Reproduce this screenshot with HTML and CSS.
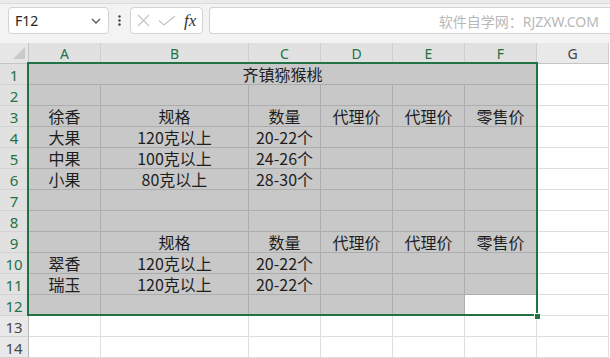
FILE: index.html
```html
<!DOCTYPE html>
<html lang="zh-CN">
<head>
<meta charset="utf-8">
<title>齐镇猕猴桃</title>
<link rel="stylesheet" href="styles.css">
</head>
<body>
<div class="topband"></div>
<div class="toolbar">
  <div class="namebox">
    <span class="ref">F12</span>
    <svg class="chev" width="10" height="6" viewBox="0 0 10 6"><path d="M1 1 L5 5 L9 1" fill="none" stroke="#555" stroke-width="1.3"/></svg>
  </div>
  <div class="dots">
    <svg width="3" height="11" viewBox="0 0 3 11"><circle cx="1.5" cy="1.5" r="1.2" fill="#444"/><circle cx="1.5" cy="5.5" r="1.2" fill="#444"/><circle cx="1.5" cy="9.5" r="1.2" fill="#444"/></svg>
  </div>
  <div class="fxbox">
    <svg class="icon-x" width="13" height="13" viewBox="0 0 13 13"><path d="M1 1 L12 12 M12 1 L1 12" stroke="#c4c4c4" stroke-width="1.2" fill="none"/></svg>
    <svg class="icon-ok" width="18" height="11" viewBox="0 0 18 11"><path d="M1 5.5 L6 10 L17 1" stroke="#c4c4c4" stroke-width="1.2" fill="none"/></svg>
    <span class="fx">fx</span>
  </div>
  <div class="formula"><span class="wm">软件自学网：RJZXW.COM</span></div>
</div>

<div class="sheet">
  <div class="corner"><span class="tri"></span></div>
  <div class="ch on">A</div><div class="ch on">B</div><div class="ch on">C</div><div class="ch on">D</div><div class="ch on">E</div><div class="ch on">F</div><div class="ch">G</div>

  <div class="rh on">1</div>
  <div class="c g title">齐镇猕猴桃</div>
  <div class="c"></div>

  <div class="rh on">2</div>
  <div class="c g"></div><div class="c g"></div><div class="c g"></div><div class="c g"></div><div class="c g"></div><div class="c g"></div><div class="c"></div>

  <div class="rh on">3</div>
  <div class="c g">徐香</div><div class="c g">规格</div><div class="c g">数量</div><div class="c g">代理价</div><div class="c g">代理价</div><div class="c g">零售价</div><div class="c"></div>

  <div class="rh on">4</div>
  <div class="c g">大果</div><div class="c g">120克以上</div><div class="c g">20-22个</div><div class="c g"></div><div class="c g"></div><div class="c g"></div><div class="c"></div>

  <div class="rh on">5</div>
  <div class="c g">中果</div><div class="c g">100克以上</div><div class="c g">24-26个</div><div class="c g"></div><div class="c g"></div><div class="c g"></div><div class="c"></div>

  <div class="rh on">6</div>
  <div class="c g">小果</div><div class="c g">80克以上</div><div class="c g">28-30个</div><div class="c g"></div><div class="c g"></div><div class="c g"></div><div class="c"></div>

  <div class="rh on">7</div>
  <div class="c g"></div><div class="c g"></div><div class="c g"></div><div class="c g"></div><div class="c g"></div><div class="c g"></div><div class="c"></div>

  <div class="rh on">8</div>
  <div class="c g"></div><div class="c g"></div><div class="c g"></div><div class="c g"></div><div class="c g"></div><div class="c g"></div><div class="c"></div>

  <div class="rh on">9</div>
  <div class="c g"></div><div class="c g">规格</div><div class="c g">数量</div><div class="c g">代理价</div><div class="c g">代理价</div><div class="c g">零售价</div><div class="c"></div>

  <div class="rh on">10</div>
  <div class="c g">翠香</div><div class="c g">120克以上</div><div class="c g">20-22个</div><div class="c g"></div><div class="c g"></div><div class="c g"></div><div class="c"></div>

  <div class="rh on">11</div>
  <div class="c g">瑞玉</div><div class="c g">120克以上</div><div class="c g">20-22个</div><div class="c g"></div><div class="c g"></div><div class="c g"></div><div class="c"></div>

  <div class="rh on">12</div>
  <div class="c g"></div><div class="c g"></div><div class="c g"></div><div class="c g"></div><div class="c g"></div><div class="c active"></div><div class="c"></div>

  <div class="rh">13</div>
  <div class="c"></div><div class="c"></div><div class="c"></div><div class="c"></div><div class="c"></div><div class="c"></div><div class="c"></div>

  <div class="rh">14</div>
  <div class="c"></div><div class="c"></div><div class="c"></div><div class="c"></div><div class="c"></div><div class="c"></div><div class="c"></div>

  <div class="selection"><span class="handle"></span></div>
</div>
</body>
</html>
```

FILE: styles.css
```css
* { box-sizing: border-box; }

body {
  margin: 0;
  width: 610px;
  height: 358px;
  overflow: hidden;
  background: #f3f3f3;
  font-family: "Noto Sans", "Noto Sans CJK SC", sans-serif;
}

.topband {
  height: 4px;
  background: #ebebeb;
  border-bottom: 1px solid #dcdcdc;
}

.toolbar {
  height: 39px;
  display: flex;
  align-items: flex-start;
  padding: 3px 0 0 8px;
}

.namebox {
  width: 101px;
  height: 27px;
  background: #fff;
  border: 1px solid #d3d3d3;
  border-radius: 4px;
  display: flex;
  align-items: center;
  justify-content: space-between;
  padding: 0 7px 0 6px;
}

.ref {
  font-size: 14px;
  color: #262626;
}

.dots {
  width: 21px;
  height: 27px;
  display: flex;
  align-items: center;
  justify-content: center;
}

.fxbox {
  width: 73px;
  height: 27px;
  background: #fff;
  border: 1px solid #d3d3d3;
  border-radius: 4px;
  display: flex;
  align-items: center;
  padding-left: 6px;
}

.icon-x { margin-right: 8px; }
.icon-ok { margin-right: 8px; }

.fx {
  font-family: "Liberation Serif", "DejaVu Serif", serif;
  font-style: italic;
  font-size: 17px;
  color: #333;
  line-height: 1;
}

.formula {
  flex: 1;
  margin-left: 6px;
  height: 27px;
  background: #fff;
  border: 1px solid #d3d3d3;
  border-right: none;
  border-radius: 4px 0 0 4px;
  display: flex;
  align-items: center;
  justify-content: flex-end;
  padding-right: 11px;
}

.wm {
  font-family: "Noto Sans", "Noto Sans CJK SC", sans-serif;
  font-size: 14px;
  color: #b8b8b8;
}

.sheet {
  position: relative;
  display: grid;
  grid-template-columns: 29px 72px 148px 72px 72px 72px 72px 72px;
  grid-template-rows: 21px;
  grid-auto-rows: 21px;
  background: #fff;
}

.corner {
  position: relative;
  background: #e6e6e6;
  border-right: 1px solid #c4c4c4;
  border-bottom: 1px solid #c4c4c4;
}

.tri {
  position: absolute;
  right: 3px;
  bottom: 4px;
  width: 0;
  height: 0;
  border-left: 12px solid transparent;
  border-bottom: 12px solid #c9c9c9;
}

.ch {
  background: #e9e9e9;
  border-right: 1px solid #cfcfcf;
  border-bottom: 1px solid #c4c4c4;
  font-size: 14px;
  line-height: 20px;
  padding-top: 1px;
  text-align: center;
  color: #444;
}

.rh {
  background: #e9e9e9;
  border-right: 1px solid #b9b9b9;
  border-bottom: 1px solid #d3d3d3;
  font-size: 15px;
  line-height: 20px;
  padding-top: 1px;
  text-align: center;
  color: #4a4a4a;
}

.ch.on, .rh.on {
  background: #e1e1e1;
  color: #1f7244;
}

.c {
  border-right: 1px solid #dedede;
  border-bottom: 1px solid #dedede;
  font-family: "Noto Sans CJK SC", sans-serif;
  font-size: 16px;
  line-height: 20px;
  text-align: center;
  color: #1e1e1e;
  white-space: nowrap;
}

.c.g {
  background: #c8c8c8;
  border-right-color: #adadad;
  border-bottom-color: #adadad;
}

.c.active {
  background: #fff;
  border-bottom-color: #adadad;
}

.title {
  grid-column: span 6;
}

.selection {
  position: absolute;
  left: 27px;
  top: 19px;
  width: 511px;
  height: 254px;
  border: 2px solid #217346;
  pointer-events: none;
}

.handle {
  position: absolute;
  right: -4px;
  bottom: -5px;
  width: 6px;
  height: 6px;
  background: #217346;
  border-left: 1px solid #fff;
  border-top: 1px solid #fff;
}
```
